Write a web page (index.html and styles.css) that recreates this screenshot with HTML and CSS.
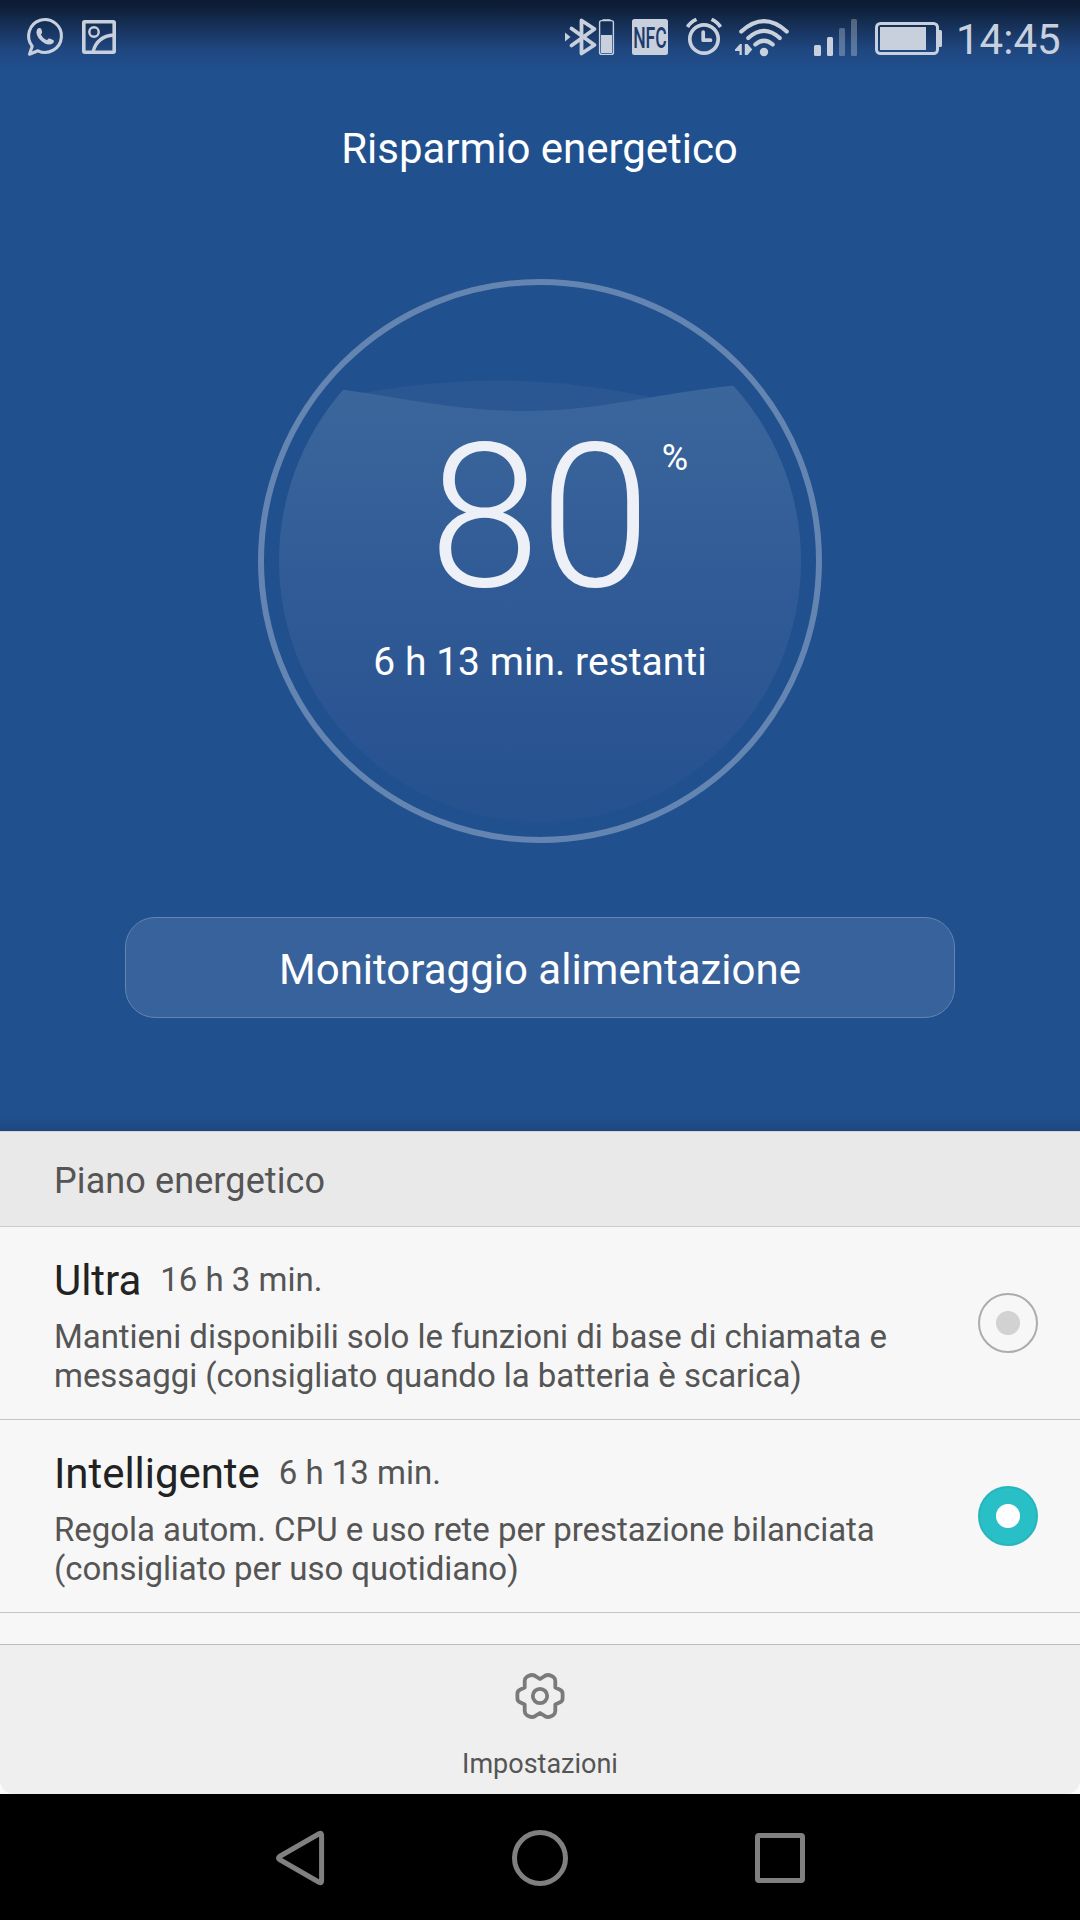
FILE: index.html
```html
<!DOCTYPE html>
<html lang="it">
<head>
<meta charset="utf-8">
<title>Risparmio energetico</title>
<link rel="stylesheet" href="styles.css">
</head>
<body>
<div class="screen">
  <section class="hero">
    <header class="status">
      <svg class="whatsapp" width="38" height="42" viewBox="26 16 38 42">
        <path d="M32.2 46.200A16.400 16.400 0 1 1 38 50.800L29.500 54.200Z" fill="none" stroke="currentColor" stroke-width="3.1" stroke-linejoin="round"/>
        <path d="M37.2 29.2Q39 27 41 28.6Q42.6 31.6 42 33.2L40.8 34.6Q42.6 38.4 46.8 40.2L48.6 38.6Q50 38 53.8 40.4Q54.6 42 52.6 43.6Q49 45.8 44.4 43.2Q38.4 39.4 36.8 34.4Q36 31.4 37.2 29.2Z" fill="currentColor"/>
      </svg>
      <svg class="picture" width="34" height="42" viewBox="82 16 34 42">
        <rect x="83.8" y="21.8" width="30.4" height="30.4" rx="1" fill="none" stroke="currentColor" stroke-width="3.6"/>
        <circle cx="94" cy="32" r="4.7" fill="none" stroke="currentColor" stroke-width="2.4"/>
        <path d="M93 52Q97 36 114 35" fill="none" stroke="currentColor" stroke-width="3.4"/>
      </svg>
      <svg class="bluetooth" width="52" height="42" viewBox="564 16 52 42">
        <path d="M571.5 28.5L594.5 45L581.5 53.5V20.5L594.5 29L571.5 45.5" fill="none" stroke="currentColor" stroke-width="3.8" stroke-linecap="round" stroke-linejoin="round"/>
        <path d="M565 32.5L570.5 37L565 41.5Z" fill="currentColor"/>
        <path d="M602.5 19.2H610.5V21H602.5Z" fill="currentColor"/>
        <rect x="599.6" y="20.6" width="13.8" height="33.8" rx="2" fill="none" stroke="currentColor" stroke-width="1.4"/>
        <rect x="601" y="35" width="11" height="18" fill="currentColor"/>
      </svg>
      <svg class="nfc" width="36" height="42" viewBox="632 16 36 42">
        <rect x="632" y="19" width="36" height="36" rx="2.5" fill="currentColor"/>
        <text class="nfc-text" x="633.2" y="47.8" textLength="33.5" lengthAdjust="spacingAndGlyphs">NFC</text>
      </svg>
      <svg class="alarm" width="38" height="42" viewBox="685 16 38 42">
        <g fill="none" stroke="currentColor" stroke-width="3.7">
          <circle cx="704" cy="39" r="14.2"/>
          <path d="M703.2 32V40.2H710.5" stroke-linecap="round" stroke-linejoin="round"/>
          <path d="M687.5 27Q690.5 22 696.5 19.4M711.5 19.4Q717.5 22 720.5 27"/>
        </g>
      </svg>
      <svg class="wifi" width="56" height="42" viewBox="734 16 56 42">
        <g fill="none" stroke="currentColor" stroke-width="4.2" stroke-linecap="round">
          <path d="M741.3 31.5Q764 10.8 786.7 31.5"/>
          <path d="M748.3 38Q764 23.8 779.7 38"/>
          <path d="M755.3 44.5Q764 37 772.7 44.5"/>
        </g>
        <circle cx="764" cy="52" r="4.2" fill="currentColor"/>
        <path d="M735 49.5L740 44H741.8V55H739.5V51H735ZM744.8 44H747.5L752.3 49.5L747.5 55H744.8Z" fill="currentColor"/>
      </svg>
      <svg class="signal" width="44" height="42" viewBox="814 16 44 42">
        <rect x="814" y="45" width="7" height="11" rx="1.5" fill="currentColor"/>
        <rect x="827" y="37" width="6" height="19" rx="1.5" fill="currentColor"/>
        <rect x="839" y="28" width="6" height="28" rx="1.5" class="dim"/>
        <rect x="851" y="19" width="6" height="37" rx="1.5" class="dim"/>
      </svg>
      <svg class="battery" width="68" height="42" viewBox="875 16 68 42">
        <rect x="876.5" y="23.5" width="61" height="30" rx="4" fill="none" stroke="currentColor" stroke-width="3"/>
        <rect x="880" y="27" width="46" height="23" fill="currentColor"/>
        <path d="M938.5 30H940.5Q942 30 942 31.5V45.5Q942 47 940.5 47H938.5Z" fill="currentColor"/>
      </svg>
      <span class="clock">14:45</span>
    </header>
    <h1 class="title">Risparmio energetico</h1>
    <div class="gauge">
      <svg class="gauge-art" width="564" height="564" viewBox="258 279 564 564">
        <defs>
          <linearGradient id="water" x1="0" y1="386" x2="0" y2="822" gradientUnits="userSpaceOnUse">
            <stop offset="0" stop-color="#3b669c"/>
            <stop offset=".45" stop-color="#315b96"/>
            <stop offset="1" stop-color="#25518f"/>
          </linearGradient>
          <clipPath id="bowl"><circle cx="540" cy="561" r="261"/></clipPath>
        </defs>
        <circle cx="540" cy="561" r="279" fill="none" stroke="#6485b1" stroke-width="6"/>
        <g clip-path="url(#bowl)">
          <path d="M340 397.5Q420 380.5 500 380.5Q570 380.5 653 397.5L653 430H340Z" fill="#2a5792"/>
          <path d="M330 387.5L343.5 389.8C400 397.5 455 411 524 411C600 411 640 396 733.5 385.5L810 378V830H270V380Z" fill="url(#water)"/>
        </g>
      </svg>
      <div class="reading">
        <div class="level"><span class="number">80</span><span class="percent">%</span></div>
        <div class="remaining">6 h 13 min. restanti</div>
      </div>
    </div>
    <button class="monitor">Monitoraggio alimentazione</button>
  </section>

  <main class="plans">
    <h2 class="section">Piano energetico</h2>
    <article class="plan">
      <div class="info">
        <div class="heading"><span class="name">Ultra</span><span class="time">16 h 3 min.</span></div>
        <p class="desc">Mantieni disponibili solo le funzioni di base di chiamata e<br>messaggi (consigliato quando la batteria è scarica)</p>
      </div>
      <span class="radio"></span>
    </article>
    <article class="plan">
      <div class="info">
        <div class="heading"><span class="name">Intelligente</span><span class="time">6 h 13 min.</span></div>
        <p class="desc">Regola autom. CPU e uso rete per prestazione bilanciata<br>(consigliato per uso quotidiano)</p>
      </div>
      <span class="radio selected"></span>
    </article>
  </main>

  <div class="dock">
    <footer class="settings">
      <svg width="50" height="50" viewBox="-25 -25 50 50" fill="none" stroke="#7a7a7a" stroke-width="3.8" stroke-linejoin="round">
        <path d="M0-17L5-20.2Q8-21.8 11-20.3L13.6-18.8Q15.3-17.6 15.3-15V-8.4L20-6.3Q22.6-5 22.6-2.4V2.4Q22.6 5 20 6.3L15.3 8.4V15Q15.3 17.6 13.6 18.8L11 20.3Q8 21.8 5 20.2L0 17L-5 20.2Q-8 21.8-11 20.3L-13.6 18.8Q-15.3 17.6-15.3 15V8.4L-20 6.3Q-22.6 5-22.6 2.4V-2.4Q-22.6-5-20-6.3L-15.3-8.4V-15Q-15.3-17.6-13.6-18.8L-11-20.3Q-8-21.8-5-20.2Z"/>
        <circle r="7.2"/>
      </svg>
      <span class="settings-label">Impostazioni</span>
    </footer>
  </div>

  <nav class="nav">
    <svg width="60" height="60" viewBox="-30 -30 60 60"><path d="M19.5-24.5Q21.6-25.2 21.6-22.5V22.5Q21.6 25.2 19.5 24.5L-20.5 1.5Q-22.5 0-20.5-1.5Z"/></svg>
    <svg width="60" height="60" viewBox="-30 -30 60 60"><circle r="25.5"/></svg>
    <svg width="60" height="60" viewBox="-30 -30 60 60"><rect x="-22.5" y="-22.5" width="45" height="45" rx="1.5"/></svg>
  </nav>
</div>
</body>
</html>
```
FILE: styles.css
```css
* { box-sizing: border-box; }

body {
  margin: 0;
  font-family: Roboto, "Noto Sans", sans-serif;
}

h1, h2, p { margin: 0; font-weight: 400; }

svg { display: block; flex: none; overflow: visible; }

.screen {
  width: 1080px;
  height: 1920px;
  display: flex;
  flex-direction: column;
  background: #000;
}

.hero {
  height: 1131px;
  flex: none;
  display: flex;
  flex-direction: column;
  align-items: center;
  color: #fff;
  background:
    linear-gradient(#0d1b34 0, #0e1e38 7px, #132c4e 20px, #1b3a6a 36px, #1f4780 50px, #20508e 70px, transparent 76px),
    linear-gradient(transparent 1117px, #1d4781 1131px),
    #20508e;
}

.status {
  width: 100%;
  height: 76px;
  padding: 16px 0 0 26px;
  display: flex;
  align-items: flex-start;
  color: #c9d0dd;
}

.picture { margin-left: 18px; }
.bluetooth { margin-left: 448px; }
.nfc { margin-left: 16px; }
.alarm { margin-left: 17px; }
.wifi { margin-left: 11px; }
.signal { margin-left: 24px; }
.battery { margin-left: 17px; }

.nfc-text {
  font-size: 30px;
  font-weight: 500;
  fill: #1c3c6c;
}

.dim { fill: #fff; opacity: .27; }

.clock {
  margin-left: 13px;
  font-size: 42px;
  line-height: 48px;
  white-space: nowrap;
}

.title {
  margin-top: 24px;
  padding-right: 1px;
  font-size: 42px;
  line-height: 98px;
  letter-spacing: -.03px;
}

.gauge {
  width: 564px;
  height: 564px;
  margin-top: 81px;
  display: grid;
}

.gauge-art, .reading { grid-area: 1 / 1; }

.reading {
  display: flex;
  flex-direction: column;
  align-items: center;
  padding-top: 122px;
}

.level {
  height: 231px;
  display: flex;
  padding-left: 37px;
}

.number {
  font-size: 200px;
  font-weight: 300;
  line-height: 234px;
  color: #edf0f6;
}

.percent {
  margin-top: 36px;
  padding-left: 11px;
  font-size: 36px;
  line-height: 42px;
}

.remaining {
  font-size: 39px;
  line-height: 61px;
  letter-spacing: .03px;
}

.monitor {
  width: 830px;
  height: 101px;
  margin-top: 74px;
  padding: 5px 0 0;
  border: 1px solid #6284b0;
  border-radius: 30px;
  background: #38629b;
  color: #fff;
  font: 42px/1 Roboto, sans-serif;
}

.plans {
  height: 513px;
  flex: none;
  background: #f7f7f7;
}

.section {
  height: 96px;
  padding: 3px 54px 0;
  border-top: 1px solid #d4d4d4;
  border-bottom: 1px solid #cacaca;
  background: #e9e9e9;
  color: #555;
  font-size: 36px;
  line-height: 92px;
  letter-spacing: .1px;
}

.plan {
  height: 193px;
  display: flex;
  justify-content: space-between;
  align-items: center;
  padding: 0 42px 0 54px;
  border-bottom: 1px solid #c4c4c4;
}

.info { height: 192px; padding-top: 28px; }

.heading {
  height: 50px;
  display: flex;
  align-items: flex-start;
}

.name {
  font-size: 42px;
  line-height: 52px;
  letter-spacing: -.05px;
  color: #222;
}

.time {
  margin-left: 19px;
  font-size: 33px;
  line-height: 49px;
  color: #555;
}

.desc {
  margin-top: 12px;
  font-size: 33px;
  line-height: 39px;
  letter-spacing: -.045px;
  color: #555;
  white-space: nowrap;
}

.radio {
  width: 60px;
  height: 60px;
  flex: none;
  border: 2px solid #acacac;
  border-radius: 50%;
  background: radial-gradient(circle, #d2d2d2 11.5px, transparent 12.5px);
}

.radio.selected {
  border-color: #28b5bc;
  background: radial-gradient(circle, #fff 11.5px, #28bfc7 12.5px);
}

.dock {
  height: 150px;
  flex: none;
  background: #fbfbfb;
}

.settings {
  height: 150px;
  padding-top: 26px;
  display: flex;
  flex-direction: column;
  align-items: center;
  border-top: 1px solid #bdbdbd;
  border-radius: 0 0 14px 14px;
  background: #efefef;
}

.settings-label {
  margin-top: 27px;
  font-size: 27px;
  line-height: 32px;
  color: #555;
}

.nav {
  height: 126px;
  flex: none;
  padding-top: 2px;
  display: flex;
  justify-content: center;
  align-items: center;
  gap: 180px;
  background: #000;
}

.nav svg {
  fill: none;
  stroke: #808080;
  stroke-width: 5;
  stroke-linejoin: round;
}
```
